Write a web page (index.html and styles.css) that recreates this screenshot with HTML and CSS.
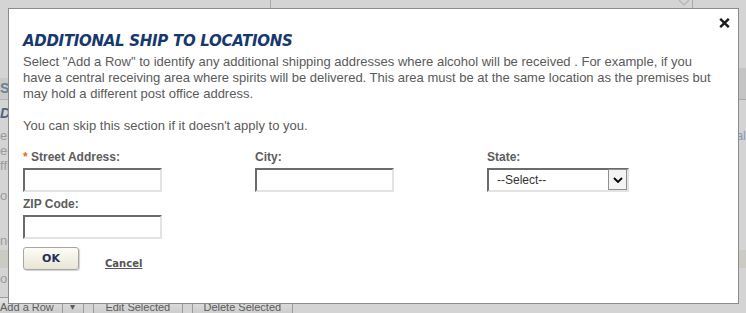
FILE: index.html
```html
<!DOCTYPE html>
<html lang="en">
<head>
<meta charset="utf-8">
<title>Additional Ship To Locations</title>
<link rel="stylesheet" href="styles.css">
</head>
<body>
<div class="page">
  <div class="topbar">
    <div class="tb-a"></div>
    <div class="tb-b">
      <svg class="tb-chev" width="12" height="6" viewBox="0 0 12 6"><path d="M1 0 L6 5 L11 0" fill="none" stroke="#b9b9b9" stroke-width="1.5"/></svg>
    </div>
    <div class="tb-c"></div>
  </div>
  <div class="sect">
    <div class="sect-left">S</div>
    <div class="sect-right"></div>
  </div>
  <div class="details">D</div>
  <div class="bgrow first"><span>el</span><span class="blue">al</span></div>
  <div class="bgrow"><span>ec</span><span></span></div>
  <div class="bgrow"><span>ffi</span><span></span></div>
  <div class="bgrow gap1"><span>o</span><span></span></div>
  <div class="bgrow gap2"><span>nc</span><span></span></div>
  <div class="band"></div>
  <div class="bgrow gap3"><span>o</span><span></span></div>
  <div class="toolbar">
    <div class="tbtn split"><span class="tbtn-main">Add a Row</span><span class="tbtn-arrow">&#9662;</span></div>
    <div class="tbtn edit">Edit Selected</div>
    <div class="tbtn del">Delete Selected</div>
  </div>
</div>

<div class="modal">
  <svg class="close" width="11" height="10" viewBox="0 0 11 10"><path d="M1.2 0.8 L9.8 9.2 M9.8 0.8 L1.2 9.2" stroke="#1e1e1e" stroke-width="2.4" stroke-linecap="butt"/></svg>
  <h2 class="title">ADDITIONAL SHIP TO LOCATIONS</h2>
  <p class="intro">Select "Add a Row" to identify any additional shipping addresses where alcohol will be received . For example, if you have a central receiving area where spirits will be delivered. This area must be at the same location as the premises but may hold a different post office address.</p>
  <p class="intro skip">You can skip this section if it doesn't apply to you.</p>
  <div class="form">
    <div class="field">
      <label class="lbl"><span class="req">*</span> Street Address:</label>
      <input class="inp" type="text">
    </div>
    <div class="field">
      <label class="lbl">City:</label>
      <input class="inp" type="text">
    </div>
    <div class="field">
      <label class="lbl">State:</label>
      <div class="select">
        <span class="select-text">--Select--</span>
        <span class="select-btn"><svg width="10" height="6" viewBox="0 0 10 6"><path d="M1 1 L5 5 L9 1" fill="none" stroke="#000" stroke-width="1.8"/></svg></span>
      </div>
    </div>
    <div class="field">
      <label class="lbl">ZIP Code:</label>
      <input class="inp" type="text">
    </div>
  </div>
  <div class="actions">
    <button class="ok" type="button">OK</button>
    <a class="cancel" href="#">Cancel</a>
  </div>
</div>
</body>
</html>
```
FILE: styles.css
```css
* { box-sizing: border-box; }
html, body { margin: 0; padding: 0; }
body {
  width: 746px;
  height: 313px;
  overflow: hidden;
  background: #d4d4d4;
  font-family: "Liberation Sans", Arial, sans-serif;
  position: relative;
}

/* background page */
.page { width: 746px; }
.topbar { display: flex; height: 8px; }
.tb-a { width: 271px; border-right: 1px solid #a9a9a9; }
.tb-b {
  width: 422px;
  border-right: 1px solid #a9a9a9;
  display: flex;
  justify-content: flex-end;
  align-items: flex-start;
  padding-right: 2px;
}
.tb-c { flex: 1; }

.sect { display: flex; align-items: flex-end; margin-top: 60px; height: 32px; }
.sect-left {
  flex: 1;
  height: 22px;
  background: #c9c9c9;
  border-bottom: 1px solid #b3b3b3;
  font-weight: bold;
  font-size: 14px;
  line-height: 21px;
  color: #6d7f94;
  white-space: nowrap;
  overflow: hidden;
}
.sect-right {
  width: 8px;
  height: 32px;
  background: #c4c4c4;
  border-bottom: 1px solid #a8a8a8;
}
.details {
  margin-top: 5px;
  font-weight: bold;
  font-style: italic;
  font-size: 14px;
  line-height: 16px;
  color: #4d6686;
}
.bgrow {
  display: flex;
  justify-content: space-between;
  font-size: 13px;
  line-height: 15px;
  color: #9b9b9b;
  height: 15px;
}
.bgrow .blue { color: #8a9ab0; }
.bgrow.first { margin-top: 7px; }
.bgrow.gap1 { margin-top: 15px; }
.bgrow.gap2 { margin-top: 30px; }
.bgrow.gap3 { margin-top: 3px; }
.band { margin-top: 2px; height: 18px; background: #cbcbc3; }

.toolbar { display: flex; margin-top: 11px; gap: 9px; margin-left: -3px; }
.tbtn {
  height: 20px;
  border: 1px solid #9c9c9c;
  border-radius: 3px;
  background: linear-gradient(#e2e2e2, #c9c9c9);
  font-size: 11px;
  line-height: 18px;
  color: #5c5c5c;
  padding: 0 13px;
  white-space: nowrap;
}
.tbtn.split { display: flex; padding: 0; }
.tbtn-main { padding: 0 8px 0 2px; border-right: 1px solid #9c9c9c; }
.tbtn-arrow { width: 20px; text-align: center; font-size: 10px; }
.tbtn.edit { width: 90px; text-align: center; padding: 0; }
.tbtn.del { width: 101px; text-align: center; padding: 0; }

/* modal */
.modal {
  position: absolute;
  left: 8px;
  top: 8px;
  width: 731px;
  height: 296px;
  background: #fff;
  border: 1px solid #8c8c8c;
  padding: 23px 21px 0 14px;
}
.close { position: absolute; top: 9px; right: 8px; }
.title {
  margin: 0;
  font-family: "DejaVu Sans", Verdana, sans-serif;
  font-style: italic;
  font-weight: bold;
  font-size: 15px;
  letter-spacing: -0.3px;
  line-height: 18px;
  color: #16386c;
}
.intro {
  margin: 4px 0 0;
  font-size: 13px;
  line-height: 16px;
  color: #5a5a5a;
}
.intro.skip { margin-top: 16px; }

.form {
  margin-top: 16px;
  display: grid;
  grid-template-columns: 232px 232px auto;
  row-gap: 5px;
}
.lbl {
  display: block;
  font-weight: bold;
  font-size: 12px;
  line-height: 15px;
  color: #5c5c5c;
  margin-bottom: 3px;
}
.req { color: #e0701c; }
.inp {
  display: block;
  width: 139px;
  height: 24px;
  margin: 0;
  padding: 0 3px;
  background: #fff;
  border-style: solid;
  border-width: 2px;
  border-color: #6b6b6b #e3e3e3 #e3e3e3 #6b6b6b;
  font-size: 12px;
  outline: none;
}
.select {
  display: flex;
  align-items: center;
  width: 142px;
  height: 24px;
  border-style: solid;
  border-width: 2px;
  border-color: #6b6b6b #e3e3e3 #e3e3e3 #6b6b6b;
  background: #fff;
}
.select-text {
  flex: 1;
  padding-left: 8px;
  font-size: 12px;
  color: #333;
  line-height: 20px;
}
.select-btn {
  width: 19px;
  height: 21px;
  margin-top: -1px;
  border: 1px solid #8f8f8f;
  background: #f3f3f3;
  display: flex;
  align-items: center;
  justify-content: center;
}

.actions {
  margin-top: 8px;
  display: flex;
  align-items: flex-end;
  gap: 26px;
}
.ok {
  width: 56px;
  height: 23px;
  margin: 0;
  padding: 0;
  font-family: "DejaVu Sans", Verdana, sans-serif;
  font-weight: bold;
  font-size: 11px;
  color: #1c2f58;
  background: linear-gradient(#fdfcf6, #e9e5d6);
  border: 1px solid #a6a6a6;
  border-radius: 3px;
  box-shadow: 1px 1px 1px rgba(0, 0, 0, 0.18);
}
.cancel {
  font-family: "DejaVu Sans", Verdana, sans-serif;
  font-weight: bold;
  font-size: 10px;
  line-height: 13px;
  color: #555;
  text-decoration: underline;
}
```
